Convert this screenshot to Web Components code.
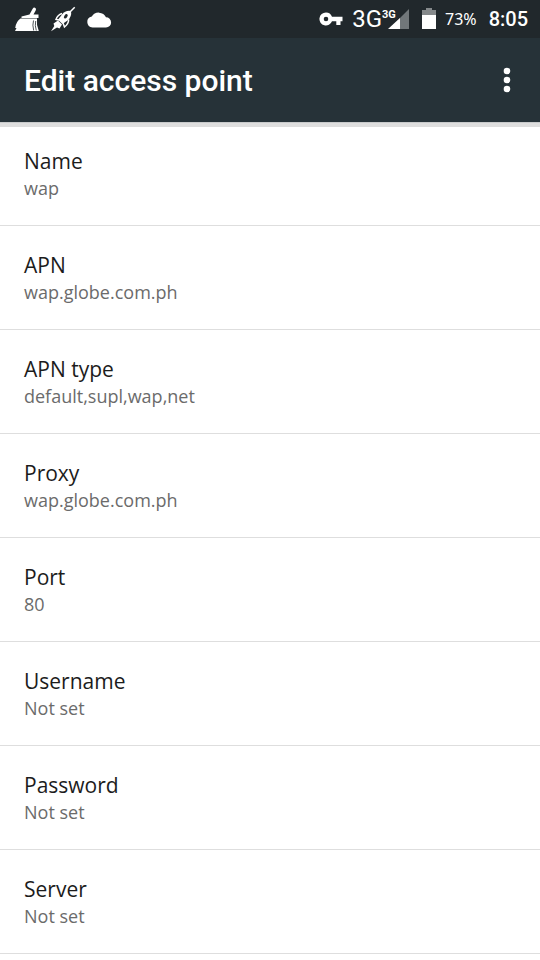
<!DOCTYPE html>
<html lang="en">
<head>
<meta charset="utf-8">
<meta name="viewport" content="width=device-width, initial-scale=1">
<title>Edit access point</title>
<style>
html, body { margin: 0; background: #fff; }
body { font-family: "Open Sans", "Noto Sans", sans-serif; overflow-x: hidden; }
</style>
</head>
<body>
<apn-screen></apn-screen>
<script>
const define = (name, html, setup) => {
  const template = document.createElement('template');
  template.innerHTML = html;
  customElements.define(name, class extends HTMLElement {
    constructor() {
      super();
      this.attachShadow({ mode: 'open' }).append(template.content.cloneNode(true));
      if (setup) setup(this.shadowRoot);
    }
  });
};

define('status-bar', `
<style>
  :host { display: flex; justify-content: space-between; align-items: center; height: 38px; padding: 0 12px 0 14px; background: #21282c; color: #fff; }
  div { display: flex; align-items: center; }
  svg { display: block; fill: #fff; }
  .left { gap: 10px; }
  .net { font: 24px/38px Roboto, sans-serif; margin-left: 9px; }
  .pct { font: 16px/38px "Noto Sans", sans-serif; margin-left: 8px; }
  .clock { font: 500 20px/38px Roboto, sans-serif; margin-left: 12px; }
  .battery { margin-left: 11px; }
</style>
<div class="left">
  <svg width="26" height="26" viewBox="0 0 26 26" aria-hidden="true">
    <path d="M15.500 8.500 18.500 3q1.300-2 2.800-1.100 1.300.9.400 2.600L19.500 8.500H24.500V12H7.500V10.500Z"/>
    <path d="M6.500 12.500H23q-.8 6.200 1.800 12.500H1L2.500 22H1.200Q2 15.500 6.500 12.500Z"/>
    <path d="M19.500 14.500q-1.300 4.500.2 10M21.700 15q-1 4.500.6 9.500" stroke="#21282c" stroke-width=".8" fill="none"/>
  </svg>
  <svg width="26" height="26" viewBox="0 0 26 26" aria-hidden="true">
    <path d="M20.500 5.500 24.700 1.300" stroke="#fff" stroke-width="1.500"/>
    <path d="M12 7.500Q7.500 9 6 13.500l3 .5M18.700 13.500Q18.500 18 14.500 21l-1.500-4" fill="none" stroke="#fff" stroke-width="1.500"/>
    <path d="M21 5Q22 11 17.500 14.500L12.500 18 8 13.700 12 8.500Q15.500 4 21 5Z"/>
    <ellipse cx="15.800" cy="10.300" rx="1.500" ry="2.500" transform="rotate(35 15.800 10.300)" fill="#21282c"/>
    <path d="M8 14.500 12 18.500 9.500 22.500 7 21.500 1 25.300 4.300 20 3.500 17.500Z"/>
  </svg>
  <svg width="26" height="26" viewBox="0 0 26 26" aria-hidden="true">
    <path d="M6.500 21.500A5.500 5.500 0 0 1 5.800 10.600 8 8 0 0 1 20 11.300 5.100 5.100 0 0 1 20 21.500Z"/>
  </svg>
</div>
<div>
  <svg width="24" height="16" viewBox="0 0 24 16" aria-hidden="true">
    <path fill-rule="evenodd" d="M7 1.500a6.500 6.500 0 0 1 6 4.200H23.500V10.300H21.500V14H17.300V10.300H13A6.500 6.500 0 1 1 7 1.500ZM7 5.700a2.300 2.300 0 1 0 0 4.600 2.300 2.300 0 0 0 0-4.600Z"/>
  </svg>
  <span class="net">3G</span>
  <svg width="28" height="24" viewBox="0 0 28 24" aria-hidden="true">
    <path d="M27 2V22H7Z" fill="#71777a"/><path d="M18 11V22H6Z"/>
    <text x="0" y="11" font-family="Roboto, sans-serif" font-size="11" font-weight="700">3G</text>
  </svg>
  <svg class="battery" width="16" height="22" viewBox="0 0 16 22" aria-hidden="true">
    <path d="M5 0h6v2h4v6H1V2h4Z" fill="#85898b"/><path d="M1 7h14v14H1Z"/>
  </svg>
  <span class="pct">73%</span>
  <span class="clock">8:05</span>
</div>`);

define('app-bar', `
<style>
  :host { display: flex; align-items: center; justify-content: space-between; height: 84px; padding: 0 16px 0 24px; background: #263238; color: #fff; box-shadow: 0 1px 0 #c8cacb, 0 5px 0 #dedede; position: relative; }
  h1 { margin: 0; padding-top: 2px; font: 500 30px/40px Roboto, sans-serif; }
  button { display: grid; place-items: center; width: 34px; height: 48px; padding: 0; border: 0; background: none; color: inherit; }
</style>
<h1><slot></slot></h1>
<button type="button" aria-label="More options">
  <svg width="8" height="26" viewBox="0 0 8 26" fill="currentColor" aria-hidden="true"><circle cx="4" cy="4" r="3.300"/><circle cx="4" cy="13" r="3.300"/><circle cx="4" cy="22" r="3.300"/></svg>
</button>`);

define('setting-row', `
<style>
  :host { display: block; border-bottom: 1px solid #dedede; }
  button { display: block; width: 100%; padding: 25px 24px 24px; border: 0; background: none; font-family: inherit; text-align: left; cursor: pointer; }
  span { display: block; }
  .title { font-size: 21px; line-height: 28px; color: #1c1c1c; }
  .value { font-size: 18px; line-height: 26px; color: #6b6b6b; }
</style>
<button type="button"><span class="title"><slot name="title"></slot></span><span class="value"><slot></slot></span></button>`);

define('apn-screen', `
<style>:host, main { display: block; }</style>
<header><status-bar></status-bar><app-bar>Edit access point</app-bar></header>
<main></main>`, root => {
  const main = root.querySelector('main');
  for (const [title, value] of [
    ['Name', 'wap'], ['APN', 'wap.globe.com.ph'], ['APN type', 'default,supl,wap,net'],
    ['Proxy', 'wap.globe.com.ph'], ['Port', '80'], ['Username', 'Not set'],
    ['Password', 'Not set'], ['Server', 'Not set']
  ]) {
    const row = document.createElement('setting-row');
    const label = document.createElement('span');
    label.slot = 'title';
    label.textContent = title;
    row.append(label, value);
    main.append(row);
  }
});
</script>
</body>
</html>
